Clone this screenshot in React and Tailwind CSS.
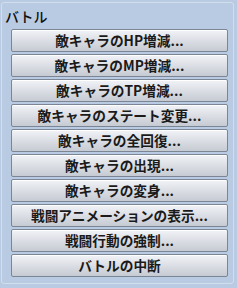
import React from "react";

const items = [
  "敵キャラのHP増減...",
  "敵キャラのMP増減...",
  "敵キャラのTP増減...",
  "敵キャラのステート変更...",
  "敵キャラの全回復...",
  "敵キャラの出現...",
  "敵キャラの変身...",
  "戦闘アニメーションの表示...",
  "戦闘行動の強制...",
  "バトルの中断",
];

export default function App() {
  return (
    <div
      className="w-[237px] h-[288px] bg-[#b9cbe2] pt-[2px] pl-[1px] pr-[3px]"
      style={{ fontFamily: '"Noto Sans CJK JP", "Noto Sans", sans-serif' }}
    >
      <div className="h-[282px] border border-[#d3deec] rounded-[3px] pl-[9px] pr-[5px]">
        <div className="h-[26px] pt-[5px] -ml-[6px] text-[14px] leading-[17px] font-medium text-[#111]">
          バトル
        </div>
        <div className="flex flex-col gap-[2px]">
          {items.map((t) => (
            <button
              key={t}
              className="h-[23px] w-full rounded-[2px] border border-[#7c8594] bg-gradient-to-b from-[#f1f3f7] to-[#c6cad2] text-[13.7px] leading-[21px] font-bold text-[#1a1a1a] text-center shadow-[inset_0_1px_0_#ffffff]"
            >
              {t}
            </button>
          ))}
        </div>
      </div>
    </div>
  );
}
